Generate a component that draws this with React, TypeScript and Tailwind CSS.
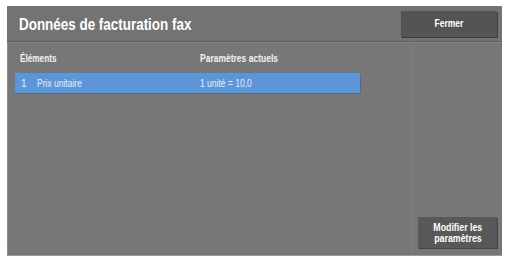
import React from "react";

export default function App() {
  const font = { fontFamily: "'Liberation Sans','Arial',sans-serif" };
  return (
    <div className="w-[506px] h-[259px] bg-white pl-[7px] pt-[6px]" style={font}>
      <div className="w-[495px] h-[250px] bg-[#777777] flex flex-col border-b border-[#9a9a9a] shadow-[inset_1px_0_0_#8a8a8a]">
        <div className="h-[35px] shrink-0 flex items-center justify-between pl-[12px] pr-[5px] bg-[#737373]">
          <div className="text-white font-bold text-[17px] leading-none mt-[2px]">
            <span className="inline-block origin-left scale-x-[0.79] whitespace-nowrap">Données de facturation fax</span>
          </div>
          <div className="w-[96px] h-[26px] bg-[#545454] flex items-center justify-center text-white text-[10px] font-bold shadow-[1px_1px_0_#3e3e3e]">
            <span className="inline-block scale-x-[0.85]">Fermer</span>
          </div>
        </div>
        <div className="h-[1px] bg-[#5e5e5e] shrink-0" />
        <div className="h-[1px] bg-[#858585] shrink-0" />
        <div className="flex flex-1 min-h-0">
          <div className="w-[405px] shrink-0 flex flex-col pl-[8px] pt-[8px]">
            <div className="flex h-[14px] items-center text-[10px] font-bold text-[#f2f2f2]">
              <div className="w-[185px] pl-[5px]">
                <span className="inline-block origin-left scale-x-[0.82] whitespace-nowrap">Éléments</span>
              </div>
              <div>
                <span className="inline-block origin-left scale-x-[0.85] whitespace-nowrap">Paramètres actuels</span>
              </div>
            </div>
            <div className="mt-[8px] w-[345px] h-[20px] bg-[#5d96d8] flex items-center text-[10px] text-[#e4ecf7] shadow-[1px_1px_0_#3f6fa6]">
              <div className="w-[22px] pl-[6px]">1</div>
              <div className="w-[163px]">
                <span className="inline-block origin-left scale-x-[0.85] whitespace-nowrap">Prix unitaire</span>
              </div>
              <div>
                <span className="inline-block origin-left scale-x-[0.85] whitespace-nowrap">1 unité = 10,0</span>
              </div>
            </div>
          </div>
          <div className="w-0 border-l border-dotted border-[#8c8c8c] my-[4px]" />
          <div className="flex-1 flex flex-col justify-end items-end pr-[5px] pb-[7px]">
            <div className="w-[79px] h-[31px] bg-[#585858] flex flex-col items-center justify-center text-white text-[10px] font-bold leading-[11px] text-center shadow-[1px_1px_0_#454545]">
              <span className="inline-block scale-x-[0.88] whitespace-nowrap">Modifier les</span>
              <span className="inline-block scale-x-[0.88] whitespace-nowrap">paramètres</span>
            </div>
          </div>
        </div>
      </div>
    </div>
  );
}
